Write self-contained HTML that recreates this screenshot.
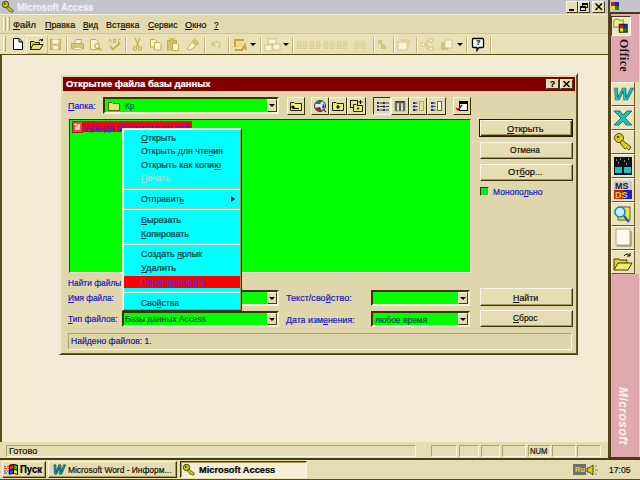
<!DOCTYPE html>
<html lang="ru">
<head>
<meta charset="utf-8">
<title>Microsoft Access</title>
<style>
*{box-sizing:border-box;margin:0;padding:0}
html,body{width:640px;height:480px;overflow:hidden}
body{background:#f2ead2;font-family:"Liberation Sans",sans-serif;font-size:9.5px;color:#181408;position:relative}
.a{position:absolute}
.t{position:absolute;white-space:nowrap;line-height:14px;height:14px;-webkit-text-stroke:.22px;transform-origin:0 50%}
u{text-decoration:underline}
#title{left:0;top:0;width:640px;height:14px;background:#c4c4cc}
.wb{position:absolute;top:1px;height:12px;background:#e6dcb4;border:1px solid;border-color:#fbf6e0 #4a3c10 #4a3c10 #fbf6e0}
#menu{left:0;top:14px;width:608px;height:19px;background:#e3d9af;border-top:1px solid #f4eed2}
#tb{left:0;top:33px;width:608px;height:21px;background:#e9e0b6;border-top:1px solid #d2c88c}
.grip{position:absolute;width:3px;border-left:1px solid #faf6e2;border-right:1px solid #b8ac70}
.sep{position:absolute;width:2px;top:37px;height:16px;border-left:1px solid #c0b478;border-right:1px solid #faf6e2}
#mdi{left:0;top:54px;width:608px;height:388px;background:#f2ead2;border-top:1px solid #5a4a18;border-left:2px solid #5a4a18}
#dlg{left:59px;top:73px;width:519px;height:282px;background:#e0d6ac;border:1px solid;border-color:#f0e8d0 #4a3c10 #4a3c10 #f0e8d0;box-shadow:inset 1px 1px 0 #f4eed8, inset -1px -1px 0 #6a5a28}
#dtitle{left:63px;top:77px;width:512px;height:14px;background:#800000}
.blue{color:#1a1ac0}
.combo{position:absolute;height:17px;background:#00ff00;border:2px solid;border-color:#3c3408 #f6f0d8 #f6f0d8 #3c3408}
.combo .dd{position:absolute;right:0;top:0;width:10px;height:13px;background:#e6dcb4;border:1px solid;border-color:#faf6e2 #4a3c10 #4a3c10 #faf6e2}
.combo .dd:after{content:"";position:absolute;left:1px;top:4px;border:3px solid transparent;border-top:3px solid #000;border-bottom:none}
.btn{position:absolute;background:#e6dcb4;border:1px solid;border-color:#fbf7e4 #3c3408 #3c3408 #fbf7e4;box-shadow:inset -1px -1px 0 #a89858}
.tbtn{position:absolute;top:97px;width:18px;height:18px;background:#e6dcb4;border:1px solid;border-color:#fbf7e4 #3c3408 #3c3408 #fbf7e4}
.tbtn svg,.ic svg{position:absolute;left:0;top:0}
#list{left:69px;top:119px;width:402px;height:154px;background:#00ff00;border:1px solid;border-color:#3c3408 #f6f0d8 #f6f0d8 #3c3408}
#cm{left:122px;top:128px;width:120px;height:183px;background:#00ffff;border:1px solid;border-color:#f0e8c8 #3c3408 #3c3408 #f0e8c8;box-shadow:inset 1px 1px 0 #fffbe8, inset -1px -1px 0 #a89858}
.cmt{color:#083838}
.s{position:absolute;left:124px;width:116px;height:2px;border-top:1px solid #c8bc88;border-bottom:1px solid #f4f0d8}
#ob{left:608px;top:0;width:32px;height:459px;background:#e6dcb4;border-left:3px solid #54421a}
.pink{position:absolute;background:#e0a9b0}
.ob{position:absolute;left:611px;width:24px;height:24px;background:#ece3be;border:1px solid;border-color:#faf6e2 #6a5a20 #6a5a20 #faf6e2}
#sb{left:0;top:442px;width:608px;height:17px;background:#e6dcb4}
.pn{position:absolute;top:445px;height:12px;border:1px solid;border-color:#b0a468 #fbf7e4 #fbf7e4 #b0a468}
#task{left:0;top:458px;width:640px;height:22px;background:#e6dcb4;border-top:2px solid #4a3c10}
.tk{position:absolute;top:461px;height:17px;background:#e6dcb4;border:1px solid;border-color:#fbf7e4 #3c3408 #3c3408 #fbf7e4;box-shadow:inset -1px -1px 0 #a89858}
</style>
</head>
<body>
<div id="title" class="a"></div>
<div class="t" id="x1" style="left:17px;top:0px;transform:scaleX(0.884);font-weight:bold;font-size:10.5px;color:#f0f0f4">Microsoft Access</div>
<svg class="a" style="left:1px;top:0" width="15" height="14" viewBox="0 0 15 14"><circle cx="4.5" cy="4.5" r="3.2" fill="#c8c820" stroke="#404000" stroke-width="1"/><circle cx="3.8" cy="3.8" r="1" fill="#404000"/><path d="M6.5 6 L12.5 10.5 L11 12.5 L9.5 11 L8.5 11.5 L5.5 8 Z" fill="#c8c820" stroke="#404000" stroke-width="0.8"/></svg>
<div class="wb" style="left:566px;width:12px"><div class="a" style="left:2px;top:7px;width:5px;height:2px;background:#000"></div></div>
<div class="wb" style="left:578px;width:12px"><div class="a" style="left:3px;top:1px;width:6px;height:5px;border:1px solid #000;border-top-width:2px"></div><div class="a" style="left:1px;top:4px;width:6px;height:5px;border:1px solid #000;border-top-width:2px;background:#e6dcb4"></div></div>
<div class="wb" style="left:592px;width:13px"><svg class="a" style="left:2px;top:1px" width="8" height="8" viewBox="0 0 8 8"><path d="M0.5 0.5 L7 7 M7 0.5 L0.5 7" stroke="#000" stroke-width="1.5"/></svg></div>
<div id="menu" class="a"><div class="grip" style="left:3px;top:2px;height:14px"></div><div class="grip" style="left:7px;top:2px;height:14px"></div></div>
<div class="t" id="x2" style="left:13px;top:17.5px;transform:scaleX(0.984);"><u>Ф</u>айл</div>
<div class="t" id="x3" style="left:44.5px;top:17.5px;transform:scaleX(0.938);"><u>П</u>равка</div>
<div class="t" id="x4" style="left:82.5px;top:17.5px;transform:scaleX(0.872);"><u>В</u>ид</div>
<div class="t" id="x5" style="left:106px;top:17.5px;transform:scaleX(0.945);">Вст<u>а</u>вка</div>
<div class="t" id="x6" style="left:147.5px;top:17.5px;transform:scaleX(0.906);"><u>С</u>ервис</div>
<div class="t" id="x7" style="left:185px;top:17.5px;transform:scaleX(0.974);"><u>О</u>кно</div>
<div class="t" id="x8" style="left:214px;top:17.5px;transform:scaleX(0.850);"><u>?</u></div>
<div id="tb" class="a"><div class="grip" style="left:3px;top:2px;height:16px"></div></div>
<div class="sep" style="left:66px"></div>
<div class="sep" style="left:125px"></div>
<div class="sep" style="left:204px"></div>
<div class="sep" style="left:228px"></div>
<div class="sep" style="left:260px"></div>
<div class="sep" style="left:292px"></div>
<div class="sep" style="left:373px"></div>
<div class="sep" style="left:393px"></div>
<div class="sep" style="left:416px"></div>
<div class="sep" style="left:466px"></div>
<svg class="a" style="left:12px;top:37px" width="12" height="14" viewBox="0 0 12 14"><path d="M1.5 1.5 H7 L10.5 5 V12.5 H1.5 Z" fill="#fff" stroke="#000" stroke-width="1"/><path d="M7 1.5 V5 H10.5" fill="none" stroke="#000" stroke-width="1"/></svg>
<div class="a" style="left:26px;top:35px;width:22px;height:19px;border:1px solid;border-color:#f8f3da #c8bc80 #c8bc80 #f8f3da"></div>
<svg class="a" style="left:29px;top:38px" width="16" height="13" viewBox="0 0 16 13"><path d="M1.5 11.5 V3.5 H5 L6 4.5 H10.5 V6.5" fill="#d8d040" stroke="#202000"/><path d="M1.5 11.5 L4 6.5 H14 L11 11.5 Z" fill="#e8e060" stroke="#202000"/><path d="M10 2.5 Q12 0.5 13.5 2.5 M13.5 2.5 L13.5 0.8 M13.5 2.5 L12 2.8" stroke="#000" fill="none" stroke-width="1"/></svg>
<svg class="a" style="left:49px;top:38px" width="13" height="13" viewBox="0 0 13 13"><rect x="1.5" y="1.5" width="10" height="10" fill="#d4c47a" stroke="#c4ae4c"/><rect x="3.5" y="1.5" width="6" height="4" fill="#f8f4da"/><rect x="4" y="8" width="5" height="3.5" fill="#f8f4da"/></svg>
<svg class="a" style="left:70px;top:38px" width="15" height="13" viewBox="0 0 15 13"><path d="M4.5 5.5 L6 1.5 H11.5 L10.5 5.5" fill="#f8f4da" stroke="#c4ae4c"/><path d="M1.5 5.5 H13.5 V10.5 H1.5 Z" fill="#d4c47a" stroke="#c4ae4c"/><rect x="3.5" y="9.5" width="8" height="2" fill="#f8f4da" stroke="#c4ae4c" stroke-width=".6"/></svg>
<svg class="a" style="left:89px;top:38px" width="13" height="13" viewBox="0 0 13 13"><path d="M1.5 1.5 H7 L9.5 4 V11.5 H1.5 Z" fill="#f8f4da" stroke="#c4ae4c"/><circle cx="8" cy="8" r="2.3" fill="#f8f4da" stroke="#c4ae4c" stroke-width="1.2"/><path d="M10 10 L12.5 12.5" stroke="#c4ae4c" stroke-width="1.5"/></svg>
<svg class="a" style="left:107px;top:38px" width="15" height="13" viewBox="0 0 15 13"><path d="M1.5 4.5 L3 1 L4.5 4.5 M6.5 1 V4.5 H8.5 V1 Z M13.5 1.5 H11.5 V4.5 H13.5" fill="none" stroke="#c4ae4c" stroke-width=".9"/><path d="M3 8 L6 11.5 L13 5" stroke="#c4ae4c" stroke-width="1.8" fill="none"/></svg>
<svg class="a" style="left:132px;top:38px" width="11" height="13" viewBox="0 0 11 13"><path d="M3 0 L7 9 M8 0 L4 9" stroke="#c4ae4c" stroke-width="1.1" fill="none"/><circle cx="3" cy="10.5" r="1.7" fill="none" stroke="#c4ae4c" stroke-width="1.1"/><circle cx="8" cy="10.5" r="1.7" fill="none" stroke="#c4ae4c" stroke-width="1.1"/></svg>
<svg class="a" style="left:149px;top:38px" width="13" height="13" viewBox="0 0 13 13"><path d="M1.5 1.5 H6 L8 3.5 V9 H1.5 Z" fill="#f8f4da" stroke="#c4ae4c"/><path d="M5.5 4.5 H10 L12 6.5 V12 H5.5 Z" fill="#f8f4da" stroke="#c4ae4c"/></svg>
<svg class="a" style="left:166px;top:38px" width="14" height="13" viewBox="0 0 14 13"><rect x="1.5" y="2.5" width="9" height="9.5" fill="#d4c47a" stroke="#c4ae4c"/><rect x="4" y="0.8" width="4" height="3" fill="#d4c47a" stroke="#c4ae4c" stroke-width=".7"/><path d="M6.5 5.5 H11 L12.5 7 V12.5 H6.5 Z" fill="#f8f4da" stroke="#c4ae4c"/></svg>
<svg class="a" style="left:186px;top:38px" width="14" height="13" viewBox="0 0 14 13"><path d="M8.5 1 L13 5 L11 7 L6.5 3 Z" fill="#d4c47a" stroke="#c4ae4c" stroke-width=".7"/><path d="M6 4 L10 8 L4 12 L1 11 L3 8 Z" fill="#f8f4da" stroke="#c4ae4c"/></svg>
<svg class="a" style="left:211px;top:39px" width="11" height="11" viewBox="0 0 11 11"><path d="M2 5 Q5 1 9 4 Q10 7 7 9" stroke="#d4c47a" stroke-width="1.3" fill="none"/><path d="M0.5 2.5 V7 H5 Z" fill="#d4c47a"/></svg>
<svg class="a" style="left:233px;top:38px" width="15" height="14" viewBox="0 0 15 14"><rect x="1" y="1" width="10" height="8" fill="#c8a830"/><rect x="3" y="3" width="8" height="6" fill="#e8dc90"/><path d="M2 12 H9 L12 7 L13 12" stroke="#c8a830" stroke-width="2" fill="none"/></svg>
<div class="a" style="left:250px;top:43px;border:3px solid transparent;border-top:3px solid #000;border-bottom:none"></div>
<svg class="a" style="left:264px;top:38px" width="17" height="14" viewBox="0 0 17 14"><rect x="4" y="1" width="8" height="5" fill="#f8f4da" stroke="#d4c47a"/><rect x="1" y="7" width="7" height="6" fill="#f8f4da" stroke="#d4c47a"/><rect x="9" y="6" width="7" height="6" fill="#f8f4da" stroke="#d4c47a"/></svg>
<div class="a" style="left:283px;top:43px;border:3px solid transparent;border-top:3px solid #000;border-bottom:none"></div>
<svg class="a" style="left:296px;top:39px" width="12" height="12" viewBox="0 0 12 12"><g opacity=".55"><rect x="1.5" y="2.5" width="3" height="2" fill="none" stroke="#d4c47a"/><rect x="7.5" y="2.5" width="3" height="2" fill="none" stroke="#d4c47a"/><rect x="1.5" y="7.5" width="3" height="2" fill="none" stroke="#d4c47a"/><rect x="7.5" y="7.5" width="3" height="2" fill="none" stroke="#d4c47a"/><path d="M0 6 H12" stroke="#d4c47a"/></g></svg>
<svg class="a" style="left:309px;top:39px" width="12" height="12" viewBox="0 0 12 12"><g opacity=".55"><rect x="1.5" y="2.5" width="3" height="2" fill="none" stroke="#d4c47a"/><rect x="7.5" y="2.5" width="3" height="2" fill="none" stroke="#d4c47a"/><rect x="1.5" y="7.5" width="3" height="2" fill="none" stroke="#d4c47a"/><rect x="7.5" y="7.5" width="3" height="2" fill="none" stroke="#d4c47a"/><path d="M0 6 H12" stroke="#d4c47a"/></g></svg>
<svg class="a" style="left:323px;top:39px" width="12" height="12" viewBox="0 0 12 12"><g opacity=".55"><rect x="1.5" y="2.5" width="3" height="2" fill="none" stroke="#d4c47a"/><rect x="7.5" y="2.5" width="3" height="2" fill="none" stroke="#d4c47a"/><rect x="1.5" y="7.5" width="3" height="2" fill="none" stroke="#d4c47a"/><rect x="7.5" y="7.5" width="3" height="2" fill="none" stroke="#d4c47a"/><path d="M0 6 H12" stroke="#d4c47a"/></g></svg>
<svg class="a" style="left:336px;top:39px" width="12" height="12" viewBox="0 0 12 12"><g opacity=".55"><rect x="1.5" y="2.5" width="3" height="2" fill="none" stroke="#d4c47a"/><rect x="7.5" y="2.5" width="3" height="2" fill="none" stroke="#d4c47a"/><rect x="1.5" y="7.5" width="3" height="2" fill="none" stroke="#d4c47a"/><rect x="7.5" y="7.5" width="3" height="2" fill="none" stroke="#d4c47a"/><path d="M0 6 H12" stroke="#d4c47a"/></g></svg>
<svg class="a" style="left:354px;top:39px" width="12" height="12" viewBox="0 0 12 12"><g opacity=".55"><rect x="1.5" y="2.5" width="3" height="2" fill="none" stroke="#d4c47a"/><rect x="7.5" y="2.5" width="3" height="2" fill="none" stroke="#d4c47a"/><rect x="1.5" y="7.5" width="3" height="2" fill="none" stroke="#d4c47a"/><rect x="7.5" y="7.5" width="3" height="2" fill="none" stroke="#d4c47a"/><path d="M0 6 H12" stroke="#d4c47a"/></g></svg>
<svg class="a" style="left:376px;top:38px" width="12" height="13" viewBox="0 0 12 13"><path d="M2 2 H6 V6 H2 Z M5 6 L10 7 L10 11 L5 11 Z" fill="#d4c47a"/></svg>
<svg class="a" style="left:397px;top:38px" width="13" height="13" viewBox="0 0 13 13"><rect x="1" y="4" width="9" height="8" fill="#f8f4da" stroke="#d4c47a"/><path d="M4 2 H12 V9" fill="none" stroke="#d4c47a"/></svg>
<svg class="a" style="left:420px;top:38px" width="14" height="13" viewBox="0 0 14 13"><rect x="1" y="5" width="4" height="3" fill="#f8f4da" stroke="#d4c47a"/><rect x="9" y="1" width="4" height="3" fill="#f8f4da" stroke="#d4c47a"/><rect x="9" y="9" width="4" height="3" fill="#f8f4da" stroke="#d4c47a"/><path d="M5 6.5 H7 M7 2.5 V10.5 M7 2.5 H9 M7 10.5 H9" stroke="#d4c47a" fill="none"/></svg>
<svg class="a" style="left:440px;top:38px" width="13" height="13" viewBox="0 0 13 13"><rect x="1" y="4" width="7" height="8" fill="#d4c47a"/><rect x="5" y="2" width="7" height="8" fill="#f8f4da" stroke="#d4c47a"/></svg>
<div class="a" style="left:457px;top:43px;border:3px solid transparent;border-top:3px solid #000;border-bottom:none"></div>
<svg class="a" style="left:471px;top:37px" width="15" height="15" viewBox="0 0 15 15"><path d="M2.5 1.5 H11.5 Q12.5 1.5 12.5 2.5 V9.5 Q12.5 10.5 11.5 10.5 H8 L6 13.5 V10.5 H2.5 Q1.5 10.5 1.5 9.5 V2.5 Q1.5 1.5 2.5 1.5 Z" fill="#fff" stroke="#000" stroke-width="1.3"/></svg>
<div class="t" id="x9" style="left:475.5px;top:36px;transform:scaleX(0.920);font-weight:bold;font-size:8px;color:#000">?</div>
<div class="a" style="left:490px;top:36px;width:1px;height:17px;background:#c0b478"></div>
<div class="a" style="left:491px;top:36px;width:1px;height:17px;background:#faf6e2"></div>
<div id="mdi" class="a"></div>
<div id="dlg" class="a"></div>
<div id="dtitle" class="a"></div>
<div class="t" id="x10" style="left:65.5px;top:77px;transform:scaleX(0.993);color:#fff;font-weight:bold">Открытие файла базы данных</div>
<div class="wb" style="left:546px;top:79px;height:10px;width:13px"></div>
<div class="t" id="x11" style="left:550px;top:77px;transform:scaleX(0.909);font-weight:bold;font-size:9px;color:#000">?</div>
<div class="wb" style="left:560px;top:79px;height:10px;width:13px"><svg class="a" style="left:2px;top:1px" width="7" height="6" viewBox="0 0 7 6"><path d="M0.5 0 L6.5 6 M6.5 0 L0.5 6" stroke="#000" stroke-width="1.4"/></svg></div>
<div class="t blue" id="x12" style="left:68px;top:98.5px;transform:scaleX(0.939);"><u>П</u>апка:</div>
<div class="combo" style="left:103px;top:97px;width:176px"><svg class="a" style="left:3px;top:2px" width="12" height="10" viewBox="0 0 12 10"><path d="M0.5 9.5 V1.5 H4 L5 2.5 H11.5 V9.5 Z" fill="#e8e070" stroke="#606020"/></svg><div class="dd"></div></div>
<div class="t" id="x13" style="left:124.5px;top:98.5px;transform:scaleX(0.854);color:#005050">Кр</div>
<div class="tbtn" style="left:287px;width:18px;"><svg width="16" height="16" viewBox="0 0 16 16"><path d="M2.5 12.5 V4.5 H6 L7 5.5 H13.5 V12.5 Z" fill="#f0f060" stroke="#202000"/><path d="M5 8 V10.5 H11 M5 8 L3.5 9.5 M5 8 L6.5 9.5" stroke="#000" fill="none" stroke-width="1.2"/></svg></div>
<div class="tbtn" style="left:311px;width:18px;"><svg width="16" height="16" viewBox="0 0 16 16"><circle cx="8" cy="8" r="5.5" fill="#d0e8f0" stroke="#303030"/><path d="M3 6 Q6 2 10 3 L8 6 Z" fill="#208040"/><path d="M3 10 Q5 14 10 13 L8 9 Z" fill="#a02020"/><path d="M11 5 L13 9 L10 11 Z" fill="#2040a0"/><path d="M11 11 L14 14" stroke="#c02020" stroke-width="1.5"/></svg></div>
<div class="tbtn" style="left:329px;width:18px;"><svg width="16" height="16" viewBox="0 0 16 16"><path d="M2.5 12.5 V4.5 H6 L7 5.5 H13.5 V12.5 Z" fill="#f0f060" stroke="#202000"/><path d="M8 6.5 L10 9 L8 11.5 L6 9 Z" fill="#2020a0"/></svg></div>
<div class="tbtn" style="left:347px;width:19px;"><svg width="16" height="16" viewBox="0 0 16 16"><rect x="2.5" y="2.5" width="7" height="7" fill="#e6dcb4" stroke="#202000"/><path d="M5.5 13.5 V6.5 H8 L9 7.5 H14.5 V13.5 Z" fill="#f0f060" stroke="#202000"/><path d="M10 9 L11.5 10.5 L10 12 L8.5 10.5 Z" fill="#2020a0"/><path d="M12.5 2 V6 M10.5 4 H14.5" stroke="#000"/></svg></div>
<div class="tbtn" style="left:373px;width:18px;border-color:#3c3408 #fbf7e4 #fbf7e4 #3c3408;"><svg width="16" height="16" viewBox="0 0 16 16"><rect x="3" y="4" width="2" height="2" fill="#2020a0"/><rect x="5.5" y="4.5" width="3.5" height="1" fill="#303030"/><rect x="3" y="7.5" width="2" height="2" fill="#2020a0"/><rect x="5.5" y="8.0" width="3.5" height="1" fill="#303030"/><rect x="3" y="11" width="2" height="2" fill="#2020a0"/><rect x="5.5" y="11.5" width="3.5" height="1" fill="#303030"/><rect x="9" y="4" width="2" height="2" fill="#2020a0"/><rect x="11.5" y="4.5" width="3.5" height="1" fill="#303030"/><rect x="9" y="7.5" width="2" height="2" fill="#2020a0"/><rect x="11.5" y="8.0" width="3.5" height="1" fill="#303030"/><rect x="9" y="11" width="2" height="2" fill="#2020a0"/><rect x="11.5" y="11.5" width="3.5" height="1" fill="#303030"/></svg></div>
<div class="tbtn" style="left:391px;width:18px;"><svg width="16" height="16" viewBox="0 0 16 16"><rect x="3" y="3" width="10" height="2" fill="#404040"/><rect x="3" y="5" width="2" height="8" fill="#606060"/><rect x="7" y="5" width="2" height="8" fill="#606060"/><rect x="11" y="5" width="2" height="8" fill="#606060"/><rect x="3" y="5" width="10" height="8" fill="none" stroke="#808080" stroke-width=".6"/></svg></div>
<div class="tbtn" style="left:409px;width:18px;"><svg width="16" height="16" viewBox="0 0 16 16"><rect x="3" y="4" width="2.5" height="2" fill="#2020a0"/><rect x="5.5" y="4.5" width="2" height="1" fill="#303030"/><rect x="3" y="7.5" width="2.5" height="2" fill="#2020a0"/><rect x="5.5" y="8.0" width="2" height="1" fill="#303030"/><rect x="3" y="11" width="2.5" height="2" fill="#2020a0"/><rect x="5.5" y="11.5" width="2" height="1" fill="#303030"/><rect x="9.5" y="3.5" width="4" height="9" fill="#e8e0a0" stroke="#806820" stroke-dasharray="1 1"/></svg></div>
<div class="tbtn" style="left:427px;width:19px;"><svg width="16" height="16" viewBox="0 0 16 16"><rect x="3" y="4" width="2.5" height="2" fill="#2020a0"/><rect x="5.5" y="4.5" width="2" height="1" fill="#303030"/><rect x="3" y="7.5" width="2.5" height="2" fill="#2020a0"/><rect x="5.5" y="8.0" width="2" height="1" fill="#303030"/><rect x="3" y="11" width="2.5" height="2" fill="#2020a0"/><rect x="5.5" y="11.5" width="2" height="1" fill="#303030"/><rect x="9.5" y="3.5" width="4" height="9" fill="#fff" stroke="#806820"/></svg></div>
<div class="tbtn" style="left:453px;width:18px;"><svg width="16" height="16" viewBox="0 0 16 16"><rect x="5.5" y="3.5" width="8" height="9" fill="#fff" stroke="#000"/><rect x="5" y="3" width="9" height="3" fill="#000"/><path d="M2 10 L4 12 L8 7" stroke="#c00000" stroke-width="1.5" fill="none"/></svg></div>
<div id="list" class="a"></div>
<div class="a" style="left:83px;top:121px;width:109px;height:11px;background:#ff0000"></div>
<div class="t" id="x14" style="left:84.5px;top:121px;transform:scaleX(0.886);color:#5020c0">Аренда оборудования.mdb</div>
<svg class="a" style="left:72px;top:121px" width="11" height="12" viewBox="0 0 11 12"><rect x="0.5" y="0.5" width="10" height="11" fill="#e84848" stroke="#a02020"/><path d="M3 3 H8 V9 H3 Z" fill="#f8c0c0"/><circle cx="3.5" cy="3.5" r="1.8" fill="#f0d0d0" stroke="#802020" stroke-width=".6"/></svg>
<div class="btn" style="left:479px;top:119px;width:94px;height:18px;border:1px solid #201800;box-shadow:inset 1px 1px 0 #fbf7e4, inset -1px -1px 0 #3c3408, inset -2px -2px 0 #a89858"></div>
<div class="t" id="x15" style="left:506.7px;top:121.5px;transform:scaleX(0.978);"><u>О</u>ткрыть</div>
<div class="btn" style="left:480px;top:142px;width:93px;height:17px"></div>
<div class="t" id="x16" style="left:510px;top:143.4px;transform:scaleX(0.874);">Отмена</div>
<div class="btn" style="left:480px;top:164px;width:93px;height:17px"></div>
<div class="t" id="x17" style="left:507.6px;top:165.3px;transform:scaleX(0.969);">От<u>б</u>ор...</div>
<div class="a" style="left:480px;top:187px;width:9px;height:9px;background:#00e820;border:1px solid;border-color:#3c3408 #f6f0d8 #f6f0d8 #3c3408"></div>
<div class="t blue" id="x18" style="left:492.6px;top:185px;transform:scaleX(0.900);">Монопо<u>л</u>ьно</div>
<div class="btn" style="left:480px;top:288px;width:93px;height:18px"></div>
<div class="t" id="x19" style="left:512.8px;top:290.8px;transform:scaleX(0.929);"><u>Н</u>айти</div>
<div class="btn" style="left:480px;top:310px;width:93px;height:17px"></div>
<div class="t" id="x20" style="left:512.8px;top:311.4px;transform:scaleX(0.883);"><u>С</u>брос</div>
<div class="t blue" id="x21" style="left:68px;top:276px;transform:scaleX(0.880);">Найти файлы</div>
<div class="t blue" id="x22" style="left:68px;top:291px;transform:scaleX(0.863);"><u>И</u>мя файла:</div>
<div class="t blue" id="x23" style="left:68px;top:312px;transform:scaleX(0.892);"><u>Т</u>ип файлов:</div>
<div class="t blue" id="x24" style="left:286.25px;top:291px;transform:scaleX(0.955);">Текст/сво<u>й</u>ство:</div>
<div class="t blue" id="x25" style="left:286.25px;top:313px;transform:scaleX(0.928);">Дата изм<u>е</u>нения:</div>
<div class="combo" style="left:122px;top:290px;width:157px;height:16px"><div class="dd" style="height:12px"></div></div>
<div class="combo" style="left:122px;top:311px;width:157px;height:16px"><div class="dd" style="height:12px"></div></div>
<div class="t" id="x26" style="left:124.5px;top:312px;transform:scaleX(0.886);color:#005050">Базы данных Access</div>
<div class="combo" style="left:371px;top:290px;width:99px;height:16px"><div class="dd" style="height:12px"></div></div>
<div class="combo" style="left:371px;top:311px;width:99px;height:16px"><div class="dd" style="height:12px"></div></div>
<div class="t" id="x27" style="left:374.7px;top:313px;transform:scaleX(0.892);color:#005050">любое время</div>
<div class="a" style="left:68px;top:333px;width:504px;height:17px;border:1px solid;border-color:#b0a468 #fbf7e4 #fbf7e4 #b0a468"></div>
<div class="t" id="x28" style="left:71.25px;top:333.5px;transform:scaleX(0.907);color:#1c1c98">Найдено файлов: 1.</div>
<div id="cm" class="a"></div>
<div class="a" style="left:124px;top:276px;width:116px;height:12px;background:#ff0000"></div>
<div class="t cmt" id="x29" style="left:141px;top:131px;transform:scaleX(0.938);"><u>О</u>ткрыть</div>
<div class="t cmt" id="x30" style="left:141px;top:144.4px;transform:scaleX(0.921);">Открыть для чте<u>н</u>ия</div>
<div class="t cmt" id="x31" style="left:141px;top:157.6px;transform:scaleX(0.958);">Открыть как копи<u>ю</u></div>
<div class="t cmt" id="x32" style="left:141px;top:171px;transform:scaleX(0.945);color:#a0e4d4;"><u>П</u>ечать</div>
<div class="t cmt" id="x33" style="left:141px;top:192px;transform:scaleX(0.913);">Отправит<u>ь</u></div>
<div class="t cmt" id="x34" style="left:141px;top:213px;transform:scaleX(0.946);"><u>В</u>ырезать</div>
<div class="t cmt" id="x35" style="left:141px;top:226.6px;transform:scaleX(0.938);"><u>К</u>опировать</div>
<div class="t cmt" id="x36" style="left:141px;top:247.4px;transform:scaleX(0.933);">Создать <u>я</u>рлык</div>
<div class="t cmt" id="x37" style="left:141px;top:261px;transform:scaleX(0.965);"><u>У</u>далить</div>
<div class="t cmt" id="x38" style="left:141px;top:274.6px;transform:scaleX(0.933);color:#7828b0;">Переи<u>м</u>еновать</div>
<div class="t cmt" id="x39" style="left:141px;top:296px;transform:scaleX(0.911);">Сво<u>й</u>ства</div>
<div class="s" style="top:188px"></div>
<div class="s" style="top:208px"></div>
<div class="s" style="top:242.5px"></div>
<div class="s" style="top:291px"></div>
<div class="a" style="left:231px;top:196px;border:3px solid transparent;border-left:4px solid #000;border-right:none"></div>
<div id="ob" class="a"></div>
<div class="a" style="left:610px;top:0;width:30px;height:12px;background:#c4c4cc"></div>
<div class="a" style="left:610px;top:12px;width:30px;height:2px;background:#4a3810"></div>
<svg class="a" style="left:611px;top:2px" width="8" height="8" viewBox="0 0 8 8"><rect x="0" y="0" width="4" height="4" fill="#c02020"/><rect x="4" y="0" width="4" height="4" fill="#2020c0"/><rect x="0" y="4" width="4" height="4" fill="#e0e020"/><rect x="4" y="4" width="4" height="4" fill="#208020"/></svg>
<div class="pink" style="left:611px;top:14px;width:28px;height:68px"></div>
<div class="a" style="left:611px;top:16px;width:20px;height:20px;background:#f0e8c8;border:1px solid;border-color:#4a3810 #fbf7e4 #fbf7e4 #4a3810"></div>
<svg class="a" style="left:612px;top:17px" width="18" height="18" viewBox="0 0 16 16"><path d="M1.5 3.5 Q3 1 6 2.5 Q8 3.5 10 2.5 V9 H1.5 Z" fill="#f0f060" stroke="#909090"/><rect x="6" y="6" width="8" height="8" fill="#202020"/><rect x="7" y="7" width="3" height="3" fill="#c02020"/><rect x="10" y="7" width="3" height="3" fill="#2020c0"/><rect x="7" y="10" width="3" height="3" fill="#e0e020"/><rect x="10" y="10" width="3" height="3" fill="#208020"/></svg>
<div class="a" style="left:609.5px;top:39px;width:27px;height:44px;white-space:nowrap;letter-spacing:.25px;writing-mode:vertical-rl;font-family:'Liberation Serif',serif;font-weight:bold;font-size:12px;line-height:27px;color:#201020">Office</div>
<div class="ob" style="top:82px"></div>
<div class="ob" style="top:106px"></div>
<div class="ob" style="top:130px"></div>
<div class="ob" style="top:154px"></div>
<div class="ob" style="top:178px"></div>
<div class="ob" style="top:202px"></div>
<div class="ob" style="top:226px"></div>
<div class="ob" style="top:250px"></div>
<svg class="a" style="left:612px;top:83px" width="22" height="22" viewBox="0 0 22 22"><text x="1" y="17" font-size="17" font-weight="bold" font-style="italic" font-family="Liberation Sans, sans-serif" fill="#20d0d0" stroke="#106868" stroke-width=".7" textLength="19" lengthAdjust="spacingAndGlyphs">W</text></svg>
<svg class="a" style="left:612px;top:107px" width="22" height="22" viewBox="0 0 22 22"><path d="M2 4 H8 L11 8 L15 4 H20 L13 11 L20 18 H14 L11 14 L7 18 H2 L9 11 Z" fill="#20c0b0" stroke="#106060" stroke-width=".8"/></svg>
<svg class="a" style="left:612px;top:131px" width="22" height="22" viewBox="0 0 22 22"><circle cx="7" cy="7" r="4.5" fill="#d8d020" stroke="#505000"/><circle cx="6" cy="6" r="1.3" fill="#505000"/><path d="M10 9 L19 16 L17 19 L14.5 17 L13 18 L8 12 Z" fill="#d8d020" stroke="#505000"/></svg>
<svg class="a" style="left:612px;top:155px" width="22" height="22" viewBox="0 0 22 22"><rect x="2" y="2" width="18" height="18" fill="#101020"/><rect x="3" y="12" width="7" height="6" fill="#20c0c0"/><rect x="12" y="12" width="7" height="6" fill="#20c0c0"/><path d="M4 5 h1 M8 4 h1 M12 6 h1 M16 4 h1 M6 8 h1 M14 9 h1" stroke="#fff"/></svg>
<svg class="a" style="left:612px;top:179px" width="22" height="22" viewBox="0 0 22 22"><rect x="2" y="2" width="18" height="18" fill="#c8c8d8"/><rect x="2" y="11" width="9" height="9" fill="#c02020"/><rect x="11" y="11" width="9" height="9" fill="#2020c0"/><text x="3" y="10" font-size="9" font-weight="bold" font-family="Liberation Sans, sans-serif" fill="#202020">MS</text><text x="3" y="19" font-size="9" font-weight="bold" font-family="Liberation Sans, sans-serif" fill="#e0d020">DS</text></svg>
<svg class="a" style="left:612px;top:203px" width="22" height="22" viewBox="0 0 22 22"><path d="M6 4 H18 V17 H6 Z" fill="#e8e060" stroke="#606020"/><circle cx="8" cy="9" r="5" fill="#c0f0f8" stroke="#2080c0" stroke-width="1.6"/><path d="M12 13 L17 19" stroke="#2060a0" stroke-width="2.4"/></svg>
<svg class="a" style="left:612px;top:227px" width="22" height="22" viewBox="0 0 22 22"><path d="M4 2 H18 V18 H4 Z" fill="#fbf8ec" stroke="#b0a880"/><path d="M5 19 H19 V4" stroke="#807850" fill="none"/></svg>
<svg class="a" style="left:612px;top:251px" width="22" height="22" viewBox="0 0 22 22"><path d="M2 19 V8 H7 L8 9 H15 V12" fill="#d8d040" stroke="#404000"/><path d="M2 19 L6 12 H20 L16 19 Z" fill="#f0e868" stroke="#404000"/><path d="M12 5 Q15 1 18 5 M18 5 V2 M18 5 H15" stroke="#000" fill="none"/></svg>
<div class="pink" style="left:611px;top:274px;width:28px;height:183px"></div>
<div class="a" id="msft" style="left:609px;top:387px;width:27px;height:62px;letter-spacing:.45px;white-space:nowrap;writing-mode:vertical-rl;font-weight:bold;font-style:italic;font-size:12px;line-height:27px;color:#fbf4f4">Microsoft</div>
<div class="a" style="left:610px;top:457px;width:30px;height:2px;background:#4a3810"></div>
<div id="sb" class="a"></div>
<div class="pn" style="left:6px;width:410px"></div>
<div class="pn" style="left:431px;width:26px"></div>
<div class="pn" style="left:459px;width:20px"></div>
<div class="pn" style="left:481px;width:19px"></div>
<div class="pn" style="left:502px;width:24px"></div>
<div class="pn" style="left:528px;width:23px"></div>
<div class="pn" style="left:552px;width:24px"></div>
<div class="pn" style="left:577px;width:24px"></div>
<div class="t" id="x40" style="left:8.75px;top:443.5px;transform:scaleX(0.963);">Готово</div>
<div class="t" id="x41" style="left:530.3px;top:444px;transform:scaleX(0.901);font-size:8.5px">NUM</div>
<div id="task" class="a"></div>
<div class="a" style="left:0;top:479px;width:640px;height:1px;background:#5a4a18"></div>
<div class="tk" style="left:2px;width:44px"><svg class="a" style="left:1px;top:1px" width="16" height="14" viewBox="0 0 16 14"><path d="M0 3.5 h2 M3 3.5 h2 M0 5.5 h3 M4 5.5 h1" stroke="#e04020" stroke-width="1"/><path d="M0 8 h2 M3 8 h2 M0 10 h3 M4 10 h1" stroke="#3040d0" stroke-width="1"/><path d="M5 2 Q9 0 14 2 V12 Q9 10 5 12 Z" fill="#101010"/><path d="M6 3 Q8 2 9 2.2 V6 Q8 5.8 6 6.8 Z" fill="#e03020"/><path d="M10 2.3 Q12 2.4 13 3 V6.8 Q12 6.2 10 6.1 Z" fill="#30b030"/><path d="M6 7.8 Q8 6.8 9 7 V10.2 Q8 10 6 11 Z" fill="#3040e0"/><path d="M10 7.1 Q12 7.2 13 7.8 V11 Q12 10.4 10 10.3 Z" fill="#e8e020"/></svg></div>
<div class="t" id="x42" style="left:20px;top:463px;transform:scaleX(0.953);font-weight:bold;font-size:10px;color:#000">Пуск</div>
<div class="tk" style="left:48px;width:129px"></div>
<div class="t" id="x43" style="left:52.5px;top:462.5px;transform:scaleX(0.936);font-weight:bold;font-style:italic;font-size:13px;color:#20c8d0;-webkit-text-stroke:.9px #0c5868">W</div>
<div class="t" id="x44" style="left:67.5px;top:463px;transform:scaleX(0.884);">Microsoft Word - Информ...</div>
<div class="tk" style="left:180px;width:127px;background:#f4eed6;border-color:#3c3408 #fbf7e4 #fbf7e4 #3c3408;box-shadow:inset 1px 1px 0 #a89858"></div>
<svg class="a" style="left:182px;top:463px" width="14" height="13" viewBox="0 0 14 13"><circle cx="4.5" cy="4.5" r="3.2" fill="#c8c820" stroke="#404000" stroke-width="1"/><circle cx="3.8" cy="3.8" r="1" fill="#404000"/><path d="M6.5 6 L12.5 10.5 L11 12.5 L9.5 11 L8.5 11.5 L5.5 8 Z" fill="#c8c820" stroke="#404000" stroke-width="0.8"/></svg>
<div class="t" id="x45" style="left:198.75px;top:463px;transform:scaleX(0.973);font-weight:bold;color:#000">Microsoft Access</div>
<div class="a" style="left:573px;top:464px;width:13px;height:11px;background:#707070"></div>
<div class="t" id="x46" style="left:574.5px;top:462.5px;transform:scaleX(0.937);color:#d8d020;font-size:8px;font-weight:bold">Ru</div>
<svg class="a" style="left:586px;top:464px" width="13" height="12" viewBox="0 0 13 12"><path d="M1 4 H3 L7 1 V11 L3 8 H1 Z" fill="#d8d020" stroke="#202000" stroke-width=".8"/><path d="M9 3 L11 1 M9 6 H12 M9 9 L11 11" stroke="#808080"/></svg>
<div class="t" id="x47" style="left:608.7px;top:463px;transform:scaleX(0.908);">17:05</div>
</body>
</html>
